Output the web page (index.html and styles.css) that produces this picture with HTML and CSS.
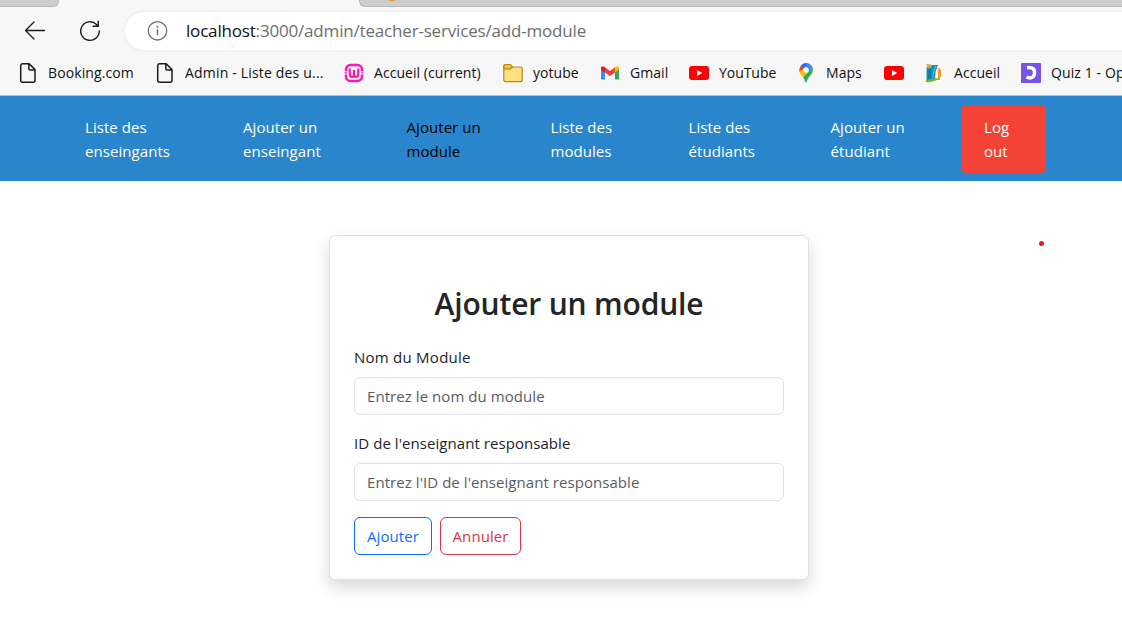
FILE: index.html
```html
<!DOCTYPE html>
<html lang="fr">
<head>
<meta charset="utf-8">
<title>Ajouter un module</title>
<link rel="stylesheet" href="styles.css">
</head>
<body>
<header class="browser">
  <div class="tabs"><div class="tab tab-left"></div><div class="tab tab-right"><svg class="tab-icon" width="8" height="2" viewBox="0 0 8 2"><ellipse cx="4" cy="-1" rx="3.4" ry="2.2" fill="#f29a38"/></svg></div></div>
  <div class="toolbar">
    <svg class="back" width="22" height="20" viewBox="0 0 22 20" fill="none" stroke="#1b1b1b" stroke-width="1.300" stroke-linecap="round" stroke-linejoin="round"><path d="M20.500 9.500H1.700M10 1 1.500 9.500l8.500 8.500"/></svg>
    <svg class="reload" width="22" height="22" viewBox="0 0 22 22" fill="none" stroke="#1b1b1b" stroke-width="1.400" stroke-linecap="round" stroke-linejoin="round"><path d="M20.300 11a9.300 9.300 0 1 1-2.800-6.600l1.300 1.500M19.300 1.200v5h-5.200"/></svg>
    <div class="address">
      <svg width="22" height="22" viewBox="0 0 22 22" fill="none" stroke="#707070" stroke-width="1.300"><circle cx="11.500" cy="10.800" r="9.200"/><path d="M11.500 9.300v6" stroke-width="1.500"/><circle cx="11.500" cy="6.700" r="1" fill="#707070" stroke="none"/></svg>
      <span class="url"><span class="host">localhost</span>:3000/admin/teacher-services/add-module</span>
    </div>
  </div>
  <div class="bookmarks">
    <div class="bookmark"><svg width="20" height="22" viewBox="0 0 20 22" fill="none" stroke="#1b1b1b" stroke-width="1.500" stroke-linejoin="round"><path d="M4.500 1.800h6.700l5.800 5.800v10.600a2 2 0 0 1-2 2H4.700a2 2 0 0 1-2-2V3.800a2 2 0 0 1 1.800-2ZM10.800 2v4.500a1.500 1.500 0 0 0 1.500 1.500h4.700"/></svg><span class="t-booking">Booking.com</span></div>
    <div class="bookmark"><svg width="20" height="22" viewBox="0 0 20 22" fill="none" stroke="#1b1b1b" stroke-width="1.500" stroke-linejoin="round"><path d="M4.500 1.800h6.700l5.800 5.800v10.600a2 2 0 0 1-2 2H4.700a2 2 0 0 1-2-2V3.800a2 2 0 0 1 1.800-2ZM10.800 2v4.500a1.500 1.500 0 0 0 1.500 1.500h4.700"/></svg><span class="t-admin">Admin - Liste des u...</span></div>
    <div class="bookmark"><svg width="20" height="20" viewBox="0 0 20 20" fill="none" stroke="#ff18b0" stroke-width="2.500"><path d="M2 8.300V6.500A4.500 4.500 0 0 1 6.500 2h7A4.500 4.500 0 0 1 18 6.500v1.800M18 11.500v2a4.500 4.500 0 0 1-4.500 4.500h-7A4.500 4.500 0 0 1 2 13.500v-2"/><path d="M.5 9.900H3M17 9.900h2.500" stroke-width="1.300"/><path d="M5.800 5.500v5.800c0 3.500 4.200 3.500 4.200.3V6.800v4.800c0 3.200 4.200 3.200 4.200-.3V5.500" stroke-width="2.200"/></svg><span class="t-current">Accueil (current)</span></div>
    <div class="bookmark"><svg width="20" height="20" viewBox="0 0 20 20" fill="#ffdf7e" stroke="#b48a20" stroke-width="1.200"><path d="M.8 16.500v-13c0-1.300.8-2 2-2h4.500l2 2.500h7.900a2 2 0 0 1 2 2v10.700a2 2 0 0 1-2 2H2.800a2 2 0 0 1-2-2.200Z"/><path d="M.8 5.300V3.500c0-1.300.8-2 2-2h4.500l2 2.500-2 1.800H1.200Z" fill="#f4c72c"/></svg><span class="t-folder">yotube</span></div>
    <div class="bookmark"><svg width="20" height="20" viewBox="0 0 20 20"><path d="M1 5v10.500a1 1 0 0 0 1 1h3V8Z" fill="#4285f4"/><path d="M15 8v8.500h3a1 1 0 0 0 1-1V5Z" fill="#34a853"/><path d="M1 5.500c0-2.400 2-2.700 3.300-1.700L10 8l5-3.800v5.200L10 13 1 6.500Z" fill="#ea4335"/><path d="m15 4.200.7-.5C17 2.800 19 3.500 19 5.500v1L15 9.500Z" fill="#fbbc04"/><path d="M1 5.500c0-1.200.5-1.800 1.200-2L5 5v4.500l-4-3Z" fill="#c5221f"/></svg><span class="t-gmail">Gmail</span></div>
    <div class="bookmark"><svg width="20" height="20" viewBox="0 0 20 20"><rect y="3" width="20" height="14" rx="3" fill="#f00"/><path d="m8 7 5.300 3L8 13Z" fill="#fff"/></svg><span class="t-youtube">YouTube</span></div>
    <div class="bookmark"><svg width="20" height="20" viewBox="0 0 20 20"><path d="M3.200 7a7 7 0 0 1 2-4.800L8 5.200 4.800 10.700A7 7 0 0 1 3.200 7Z" fill="#ea4335"/><path d="M5 2.500A7 7 0 0 1 12.500.5L8 5.800Z" fill="#1a73e8"/><path d="M12.200.4c2 .6 3.600 2 4.300 3.800l-4 4.500-4.600-3Z" fill="#4285f4"/><path d="m8 5.800 4.500 3-5.200 6c-1-1.700-3.700-4-3.900-6.500Z" fill="#fbbc04"/><path d="M16.500 4.200c1.400 4.300-1 7-3.200 9.600-1.500 1.900-2.100 3.300-2.500 4.800-.3 1.300-1.400 1.300-1.700 0-.3-1.300-.8-2.500-1.900-3.900Z" fill="#34a853"/><circle cx="10" cy="7" r="2.700" fill="#fff"/></svg><span class="t-maps">Maps</span></div>
    <div class="bookmark"><svg width="20" height="20" viewBox="0 0 20 20"><rect y="3" width="20" height="14" rx="3" fill="#f00"/><path d="m8 7 5.300 3L8 13Z" fill="#fff"/></svg></div>
    <div class="bookmark"><svg width="20" height="20" viewBox="0 0 20 20"><path fill="#fff" d="M1 1h18v18H1z"/><path d="M2.500 4.500 8 2h6l-2.500 7-.5 8-8.500.5Z" fill="#168fb5"/><path d="M5.500 6v9" stroke="#0876a0" stroke-width="2"/><path d="m2 1 6 .5-1 3-3 1Z" fill="#dba45b"/><path d="M12 3c-2 3.500-3.300 8-3 12.500" fill="none" stroke="#62c9dd" stroke-width="1"/><path d="M13.700 5c3.300-.5 3.800 3 3.300 9l-3 2Z" fill="#f59b16"/><path d="M2 17.700c6-.3 8-2.700 14-1.700-4 0-7 3.500-14 2.500Z" fill="#7cb526" stroke="#7cb526"/></svg><span class="t-accueil">Accueil</span></div>
    <div class="bookmark"><svg width="20" height="20" viewBox="0 0 20 20"><rect width="20" height="20" rx="1" fill="#7654e8"/><path d="M6 4.800C11.500 3.500 14 6.500 13.500 10.500 13 14.500 9.500 16 5.500 14" fill="none" stroke="#fff" stroke-width="3.500"/></svg><span class="t-quiz">Quiz 1 - Op</span></div>
  </div>
</header>
<nav class="nav">
  <a class="link">Liste des<br>enseingants</a>
  <a class="link">Ajouter un<br>enseingant</a>
  <a class="link active">Ajouter un<br>module</a>
  <a class="link">Liste des<br>modules</a>
  <a class="link">Liste des<br>étudiants</a>
  <a class="link">Ajouter un<br>étudiant</a>
  <a class="logout">Log<br>out</a>
</nav>
<main class="page">
  <form class="card">
    <h1 class="title">Ajouter un module</h1>
    <label class="label l-name" for="nom">Nom du Module</label>
    <input class="field f-name" id="nom" placeholder="Entrez le nom du module">
    <label class="label l-id" for="ens">ID de l'enseignant responsable</label>
    <input class="field f-id" id="ens" placeholder="Entrez l'ID de l'enseignant responsable">
    <div class="actions"><button class="btn primary" type="button">Ajouter</button><button class="btn danger" type="button">Annuler</button></div>
  </form>
  <span class="dot"></span>
</main>
</body>
</html>
```
FILE: styles.css
```css
* { box-sizing: border-box; }
body { margin: 0; width: 1122px; height: 626px; overflow: hidden; background: #fff; color: #212529; font: 15px/24px "Open Sans", "Noto Sans", sans-serif; letter-spacing: .06px; }
svg { display: block; flex: none; }
.browser { height: 96px; background: #f7f7f7; border-bottom: 1px solid #bdbdbd; overflow: hidden; }
.tabs { display: flex; justify-content: space-between; height: 7px; }
.tab { background: #cdcdcd; border-bottom: 1px solid #b8b8b8; }
.tab-left { width: 59px; border-right: 1px solid #b8b8b8; border-radius: 0 0 6px 0; }
.tab-right { width: 763px; border-left: 1px solid #b8b8b8; border-radius: 0 0 0 6px; }
.tab-icon { margin-left: 28px; }
.toolbar { display: flex; align-items: center; height: 48px; padding-left: 24px; }
.reload { margin-left: 33px; }
.address { display: flex; align-items: center; gap: 18px; width: 1020px; height: 38px; flex: none; margin-left: 24px; padding-left: 21px; background: #fff; border-radius: 19px; box-shadow: 0 0 4px #00000012; }
.url { color: #6e6e6e; font-size: 17px; white-space: nowrap; letter-spacing: -.18px; }
.host { color: #111; }
.bookmarks { display: grid; grid-template-columns: 137px 189px 159px 97px 89px 107px 88px 40px 97px 101px; align-items: center; height: 36px; padding-left: 18px; color: #111; font-size: 14px; letter-spacing: .05px; }
.bookmark { display: flex; align-items: center; gap: 10px; height: 24px; white-space: nowrap; }
.t-booking { letter-spacing: .1px; }
.t-admin { letter-spacing: .18px; }
.t-youtube { letter-spacing: -.05px; }
.t-quiz { width: 71px; overflow: hidden; letter-spacing: .1px; }
.nav { display: grid; grid-template-columns: 158px 163.500px 144px 138px 142px 130.500px 85px; align-items: center; height: 85px; padding-left: 85px; background: #2986cc; color: #fff; }
.active { color: #000; }
.logout { height: 68px; padding: 10px 23px; background: #f44336; border-radius: 5px; }
.page { position: relative; display: flex; justify-content: center; padding: 54px 0 0 16px; }
.card { width: 480px; height: 345px; padding: 49px 24px 24px; border: 1px solid #dee2e6; border-radius: 6px; background: #fff; box-shadow: 0 8px 16px rgba(0,0,0,.15); }
.title { margin: 0 0 22px; height: 38px; font-size: 30px; line-height: 38px; font-weight: 600; text-align: center; letter-spacing: -.17px; }
.label { display: block; width: max-content; margin-bottom: 8px; }
.l-name { letter-spacing: .25px; }
.field { display: block; width: 100%; height: 38px; margin: 0 0 16px; padding: 6px 12px; border: 1px solid #dee2e6; border-radius: 6px; background: #fff; color: #212529; font: inherit; letter-spacing: .06px; }
.field::placeholder { color: #595c5f; opacity: 1; }
.actions { display: flex; gap: 8px; }
.btn { height: 38px; padding: 0; border: 1px solid; border-radius: 6px; background: #fff; font: inherit; letter-spacing: .06px; }
.primary { width: 78px; color: #0d6efd; }
.danger { width: 81px; color: #dc3545; }
.dot { position: absolute; left: 1039px; top: 60px; width: 5px; height: 5px; border-radius: 50%; background: #e8191c; }
```
